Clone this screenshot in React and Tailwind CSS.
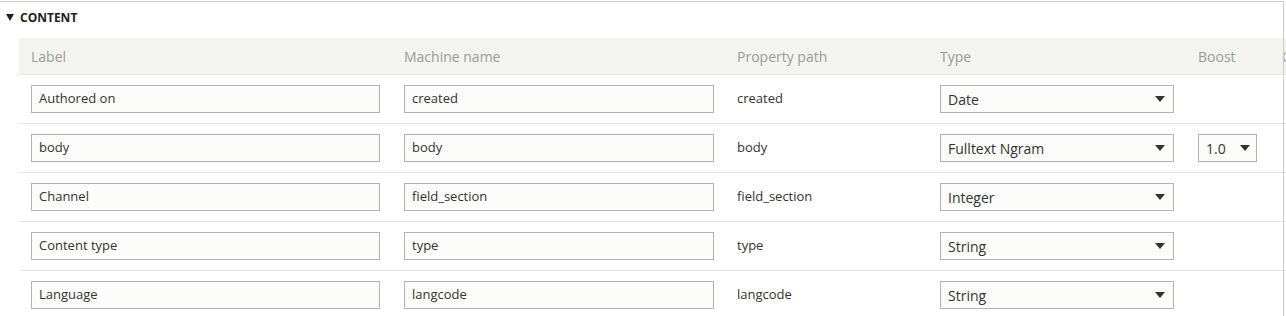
import React from "react";

const rows = [
  { label: "Authored on", machine: "created", path: "created", type: "Date" },
  { label: "body", machine: "body", path: "body", type: "Fulltext Ngram", boost: "1.0" },
  { label: "Channel", machine: "field_section", path: "field_section", type: "Integer" },
  { label: "Content type", machine: "type", path: "type", type: "String" },
  { label: "Language", machine: "langcode", path: "langcode", type: "String" },
];

function Arrow() {
  return (
    <svg width="10" height="6" viewBox="0 0 10 6" className="shrink-0">
      <path d="M0 0 L10 0 L5 6 Z" fill="#333" />
    </svg>
  );
}

function Select({ value, w, arrowPad }) {
  return (
    <div
      className={`flex h-[28px] items-center justify-between border border-[#b3b3b3] bg-[#fcfcfa] pl-[7px] text-[14px] text-[#333] ${w} ${arrowPad}`}
    >
      <span>{value}</span>
      <Arrow />
    </div>
  );
}

export default function App() {
  return (
    <div
      className="relative h-[316px] w-[1286px] overflow-hidden bg-white"
      style={{ fontFamily: '"Open Sans", sans-serif' }}
    >
      <div className="mt-[1px] h-[1px] w-[1283px] bg-[#cccccc]" />
      <div className="flex h-[36px] items-start pl-[6px] pt-[7px] text-[12px] font-bold uppercase leading-[17px] text-[#222]">
        <svg width="8" height="7" viewBox="0 0 8 7" className="mr-[6px] mt-[5px] shrink-0">
          <path d="M0 0 L8 0 L4 7 Z" fill="#222" />
        </svg>
        <span>Content</span>
      </div>
      <div className="ml-[19px] w-[1300px]">
        <div className="flex h-[37px] items-center border-b border-[#e3e3df] bg-[#f3f3ef] text-[14px] text-[#9a9a9a]">
          <div className="w-[373px] shrink-0 pl-[12px]">Label</div>
          <div className="w-[333px] shrink-0 pl-[12px]">Machine name</div>
          <div className="w-[203px] shrink-0 pl-[12px]">Property path</div>
          <div className="w-[258px] shrink-0 pl-[12px]">Type</div>
          <div className="w-[84px] shrink-0 pl-[12px]">Boost</div>
          <div className="shrink-0 pl-[12px]">Operations</div>
        </div>
        {rows.map((r) => (
          <div
            key={r.label}
            className="flex h-[49px] items-center border-b border-[#e6e6e2] text-[13px] text-[#333]"
          >
            <div className="w-[373px] shrink-0 pl-[12px]">
              <div className="flex h-[28px] w-[349px] items-center border border-[#b3b3b3] bg-[#fcfcfa] pl-[7px]">
                {r.label}
              </div>
            </div>
            <div className="w-[333px] shrink-0 pl-[12px]">
              <div className="flex h-[28px] w-[310px] items-center border border-[#b3b3b3] bg-[#fcfcfa] pl-[7px]">
                {r.machine}
              </div>
            </div>
            <div className="w-[203px] shrink-0 pl-[12px]">{r.path}</div>
            <div className="w-[258px] shrink-0 pl-[12px]">
              <Select value={r.type} w="w-[234px]" arrowPad="pr-[8px]" />
            </div>
            <div className="w-[84px] shrink-0 pl-[12px]">
              {r.boost && <Select value={r.boost} w="w-[59px]" arrowPad="pr-[6px]" />}
            </div>
          </div>
        ))}
      </div>
      <div className="absolute left-[1283px] top-[1px] h-[316px] w-[1px] bg-[#cccccc]" />
    </div>
  );
}
